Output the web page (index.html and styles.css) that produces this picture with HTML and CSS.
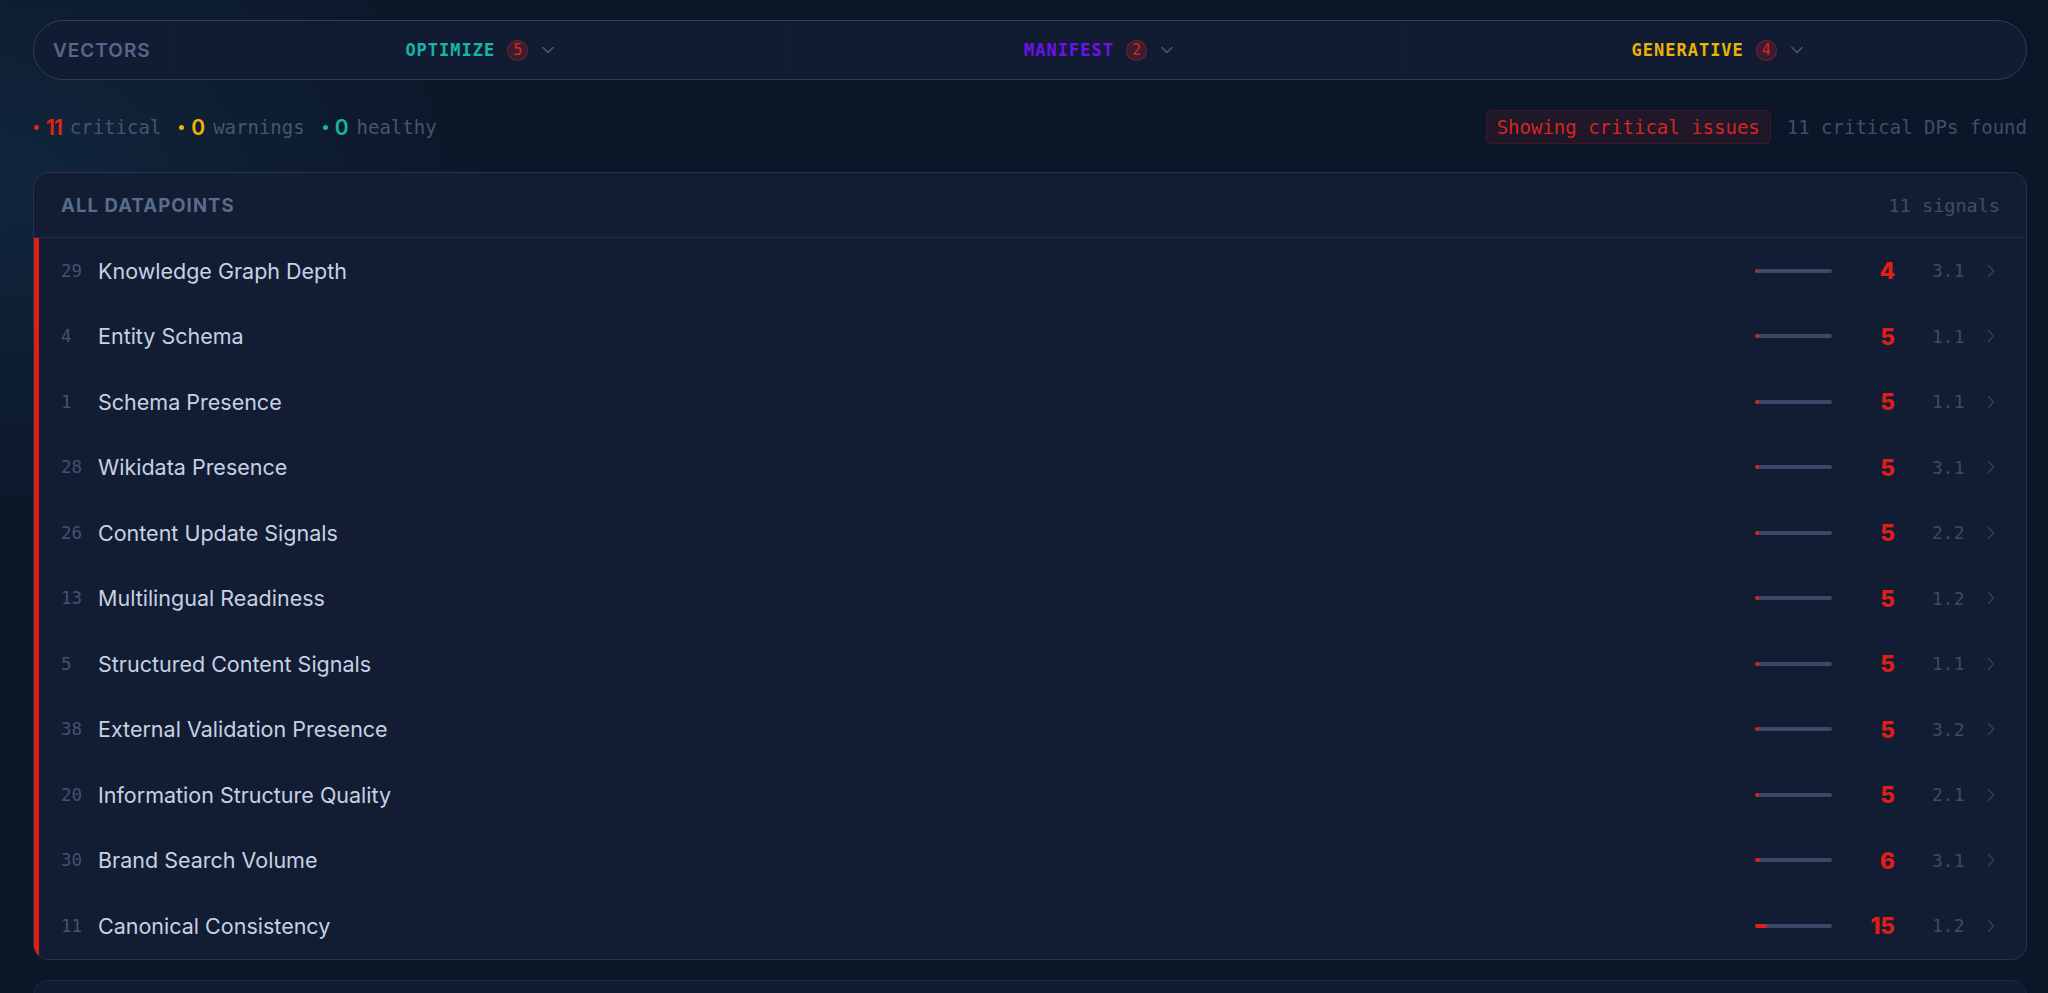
FILE: index.html
```html
<!DOCTYPE html>
<html lang="en">
<head>
  <meta charset="UTF-8">
  <meta name="viewport" content="width=device-width, initial-scale=1.0">
  <title>Vectors - All datapoints</title>
  <link rel="stylesheet" href="styles.css">
</head>
<body>
  <!-- Vector tabs -->
  <nav class="vectors">
    <div class="vectors-title">VECTORS</div>
    <div class="vector-tab">
      <span class="tab-label optimize">OPTIMIZE</span>
      <span class="badge">5</span>
      <svg class="tab-chevron" width="12" height="8" viewBox="0 0 12 8"><path d="M1 1.5 6 6.5 11 1.5" fill="none" stroke="currentColor" stroke-width="1.6" stroke-linecap="round" stroke-linejoin="round"/></svg>
    </div>
    <div class="vector-tab">
      <span class="tab-label manifest">MANIFEST</span>
      <span class="badge">2</span>
      <svg class="tab-chevron" width="12" height="8" viewBox="0 0 12 8"><path d="M1 1.5 6 6.5 11 1.5" fill="none" stroke="currentColor" stroke-width="1.6" stroke-linecap="round" stroke-linejoin="round"/></svg>
    </div>
    <div class="vector-tab">
      <span class="tab-label generative">GENERATIVE</span>
      <span class="badge">4</span>
      <svg class="tab-chevron" width="12" height="8" viewBox="0 0 12 8"><path d="M1 1.5 6 6.5 11 1.5" fill="none" stroke="currentColor" stroke-width="1.6" stroke-linecap="round" stroke-linejoin="round"/></svg>
    </div>
  </nav>

  <!-- Summary -->
  <div class="summary">
    <div class="counts">
      <span class="count-item"><i class="dot red"></i><b class="num red">11</b><span class="count-label">critical</span></span>
      <span class="count-item"><i class="dot amber"></i><b class="num amber">0</b><span class="count-label">warnings</span></span>
      <span class="count-item"><i class="dot teal"></i><b class="num teal">0</b><span class="count-label">healthy</span></span>
    </div>
    <div class="filter-info">
      <span class="filter-pill">Showing critical issues</span>
      <span class="found">11 critical DPs found</span>
    </div>
  </div>

  <!-- Datapoints -->
  <section class="card">
    <header class="card-header">
      <h2>ALL DATAPOINTS</h2>
      <span class="signals">11 signals</span>
    </header>
    <ul class="dp-list">
      <li class="dp-row"><span class="dp-id">29</span><span class="dp-name">Knowledge Graph Depth</span><span class="bar"><span class="bar-fill" style="width:4%"></span></span><span class="score">4</span><span class="dp-meta">3.1</span><svg class="row-chevron" width="8" height="14" viewBox="0 0 8 14"><path d="M1.5 1.5 6.5 7 1.5 12.5" fill="none" stroke="currentColor" stroke-width="1.5" stroke-linecap="round" stroke-linejoin="round"/></svg></li>
      <li class="dp-row"><span class="dp-id">4</span><span class="dp-name">Entity Schema</span><span class="bar"><span class="bar-fill" style="width:5%"></span></span><span class="score">5</span><span class="dp-meta">1.1</span><svg class="row-chevron" width="8" height="14" viewBox="0 0 8 14"><path d="M1.5 1.5 6.5 7 1.5 12.5" fill="none" stroke="currentColor" stroke-width="1.5" stroke-linecap="round" stroke-linejoin="round"/></svg></li>
      <li class="dp-row"><span class="dp-id">1</span><span class="dp-name">Schema Presence</span><span class="bar"><span class="bar-fill" style="width:5%"></span></span><span class="score">5</span><span class="dp-meta">1.1</span><svg class="row-chevron" width="8" height="14" viewBox="0 0 8 14"><path d="M1.5 1.5 6.5 7 1.5 12.5" fill="none" stroke="currentColor" stroke-width="1.5" stroke-linecap="round" stroke-linejoin="round"/></svg></li>
      <li class="dp-row"><span class="dp-id">28</span><span class="dp-name">Wikidata Presence</span><span class="bar"><span class="bar-fill" style="width:5%"></span></span><span class="score">5</span><span class="dp-meta">3.1</span><svg class="row-chevron" width="8" height="14" viewBox="0 0 8 14"><path d="M1.5 1.5 6.5 7 1.5 12.5" fill="none" stroke="currentColor" stroke-width="1.5" stroke-linecap="round" stroke-linejoin="round"/></svg></li>
      <li class="dp-row"><span class="dp-id">26</span><span class="dp-name">Content Update Signals</span><span class="bar"><span class="bar-fill" style="width:5%"></span></span><span class="score">5</span><span class="dp-meta">2.2</span><svg class="row-chevron" width="8" height="14" viewBox="0 0 8 14"><path d="M1.5 1.5 6.5 7 1.5 12.5" fill="none" stroke="currentColor" stroke-width="1.5" stroke-linecap="round" stroke-linejoin="round"/></svg></li>
      <li class="dp-row"><span class="dp-id">13</span><span class="dp-name">Multilingual Readiness</span><span class="bar"><span class="bar-fill" style="width:5%"></span></span><span class="score">5</span><span class="dp-meta">1.2</span><svg class="row-chevron" width="8" height="14" viewBox="0 0 8 14"><path d="M1.5 1.5 6.5 7 1.5 12.5" fill="none" stroke="currentColor" stroke-width="1.5" stroke-linecap="round" stroke-linejoin="round"/></svg></li>
      <li class="dp-row"><span class="dp-id">5</span><span class="dp-name">Structured Content Signals</span><span class="bar"><span class="bar-fill" style="width:5%"></span></span><span class="score">5</span><span class="dp-meta">1.1</span><svg class="row-chevron" width="8" height="14" viewBox="0 0 8 14"><path d="M1.5 1.5 6.5 7 1.5 12.5" fill="none" stroke="currentColor" stroke-width="1.5" stroke-linecap="round" stroke-linejoin="round"/></svg></li>
      <li class="dp-row"><span class="dp-id">38</span><span class="dp-name">External Validation Presence</span><span class="bar"><span class="bar-fill" style="width:5%"></span></span><span class="score">5</span><span class="dp-meta">3.2</span><svg class="row-chevron" width="8" height="14" viewBox="0 0 8 14"><path d="M1.5 1.5 6.5 7 1.5 12.5" fill="none" stroke="currentColor" stroke-width="1.5" stroke-linecap="round" stroke-linejoin="round"/></svg></li>
      <li class="dp-row"><span class="dp-id">20</span><span class="dp-name">Information Structure Quality</span><span class="bar"><span class="bar-fill" style="width:5%"></span></span><span class="score">5</span><span class="dp-meta">2.1</span><svg class="row-chevron" width="8" height="14" viewBox="0 0 8 14"><path d="M1.5 1.5 6.5 7 1.5 12.5" fill="none" stroke="currentColor" stroke-width="1.5" stroke-linecap="round" stroke-linejoin="round"/></svg></li>
      <li class="dp-row"><span class="dp-id">30</span><span class="dp-name">Brand Search Volume</span><span class="bar"><span class="bar-fill" style="width:6%"></span></span><span class="score">6</span><span class="dp-meta">3.1</span><svg class="row-chevron" width="8" height="14" viewBox="0 0 8 14"><path d="M1.5 1.5 6.5 7 1.5 12.5" fill="none" stroke="currentColor" stroke-width="1.5" stroke-linecap="round" stroke-linejoin="round"/></svg></li>
      <li class="dp-row"><span class="dp-id">11</span><span class="dp-name">Canonical Consistency</span><span class="bar"><span class="bar-fill" style="width:15%"></span></span><span class="score">15</span><span class="dp-meta">1.2</span><svg class="row-chevron" width="8" height="14" viewBox="0 0 8 14"><path d="M1.5 1.5 6.5 7 1.5 12.5" fill="none" stroke="currentColor" stroke-width="1.5" stroke-linecap="round" stroke-linejoin="round"/></svg></li>
    </ul>
  </section>

  <section class="card card-next"></section>
</body>
</html>
```

FILE: styles.css
```css
/* Base */
body {
  margin: 0;
  padding: 20px 21px 0 33px;
  font-family: Inter, "Noto Sans", sans-serif;
  color: #c6d1e1;
  background-color: #0c1629;
  background-image: radial-gradient(ellipse 700px 500px at 0 180px, rgba(22, 58, 82, 0.45), transparent 70%);
  min-height: 100vh;
  box-sizing: border-box;
}

/* Vector tabs */
.vectors {
  display: grid;
  grid-template-columns: 136px repeat(3, 1fr);
  height: 60px;
  box-sizing: border-box;
  border: 1px solid #2d3d5d;
  border-radius: 30px;
  background-color: #111c33;
}
.vectors-title {
  display: flex;
  align-items: center;
  padding-left: 19px;
  font-size: 19px;
  font-weight: 600;
  letter-spacing: 1px;
  color: #56688a;
}
.vector-tab {
  display: flex;
  align-items: center;
  justify-content: center;
  border-left: 1px solid #141f37;
}
.tab-label {
  font-family: "DejaVu Sans Mono", monospace;
  font-size: 17px;
  font-weight: 700;
  letter-spacing: 1px;
}
.tab-label.optimize { color: #17b5a5; }
.tab-label.manifest { color: #6d12ee; }
.tab-label.generative { color: #eab308; }
.badge {
  display: inline-flex;
  align-items: center;
  justify-content: center;
  width: 21px;
  height: 21px;
  margin-left: 12px;
  box-sizing: border-box;
  border-radius: 50%;
  border: 1px solid rgba(220, 38, 38, 0.35);
  background-color: rgba(220, 38, 38, 0.2);
  color: #e3241c;
  font-family: "DejaVu Sans Mono", monospace;
  font-size: 15px;
}
.tab-chevron {
  margin-left: 14px;
  color: #46567a;
}

/* Summary row */
.summary {
  display: flex;
  align-items: center;
  justify-content: space-between;
  height: 34px;
  margin: 30px 0 28px;
  font-family: "DejaVu Sans Mono", monospace;
  font-size: 19px;
}
.counts {
  display: flex;
  align-items: center;
  gap: 18px;
  padding-left: 1px;
}
.count-item {
  display: flex;
  align-items: center;
}
.dot {
  width: 5px;
  height: 5px;
  border-radius: 50%;
  margin-right: 7px;
}
.dot.red { background-color: #e3241c; }
.dot.amber { background-color: #f0b400; }
.dot.teal { background-color: #17b5a5; }
.num {
  font-family: Inter, sans-serif;
  font-size: 21px;
  font-weight: 600;
  margin-right: 8px;
}
.num.red { color: #e3241c; letter-spacing: -1px; }
.num.amber { color: #f0b400; }
.num.teal { color: #17b5a5; }
.count-label {
  color: #46556f;
}
.filter-info {
  display: flex;
  align-items: center;
  gap: 16px;
}
.filter-pill {
  display: flex;
  align-items: center;
  height: 34px;
  padding: 0 10px;
  box-sizing: border-box;
  border: 1px solid rgba(220, 38, 38, 0.16);
  border-radius: 6px;
  background-color: rgba(220, 38, 38, 0.1);
  color: #d42620;
}
.found {
  color: #3f4e68;
}

/* Datapoints card */
.card {
  border: 1px solid #24324d;
  border-radius: 15px;
  background-color: #121d34;
  overflow: hidden;
}
.card-header {
  display: flex;
  align-items: center;
  justify-content: space-between;
  height: 64px;
  padding: 0 26px 0 27px;
  border-bottom: 1px solid #1f2c45;
}
.card-header h2 {
  margin: 0;
  font-size: 18.5px;
  font-weight: 700;
  letter-spacing: 1.1px;
  color: #5a6c8b;
}
.signals {
  font-family: "DejaVu Sans Mono", monospace;
  font-size: 18.5px;
  color: #3f4e68;
}
.dp-list {
  list-style: none;
  margin: 0;
  padding: 0;
  border-left: 5px solid #e01d16;
}
.dp-row {
  display: flex;
  align-items: center;
  height: 65.5px;
  padding: 0 31px 0 22px;
}
.dp-id {
  width: 37px;
  font-family: "DejaVu Sans Mono", monospace;
  font-size: 17.5px;
  color: #435270;
}
.dp-name {
  flex: 1;
  font-size: 21.5px;
  color: #c6d1e1;
}
.bar {
  width: 77px;
  height: 4px;
  border-radius: 2px;
  background-color: #384a67;
  overflow: hidden;
}
.bar-fill {
  display: block;
  height: 100%;
  border-radius: 2px;
  background-color: #e01d16;
}
.score {
  width: 63px;
  text-align: right;
  font-size: 22.5px;
  font-weight: 800;
  color: #e01d16;
}
.dp-meta {
  width: 55px;
  margin-left: 37px;
  font-family: "DejaVu Sans Mono", monospace;
  font-size: 18px;
  color: #3c4b66;
}
.row-chevron {
  color: #2f3e58;
}

.card-next {
  height: 120px;
  margin-top: 20px;
  border-color: #1c2942;
  background-color: #101b31;
}
```
